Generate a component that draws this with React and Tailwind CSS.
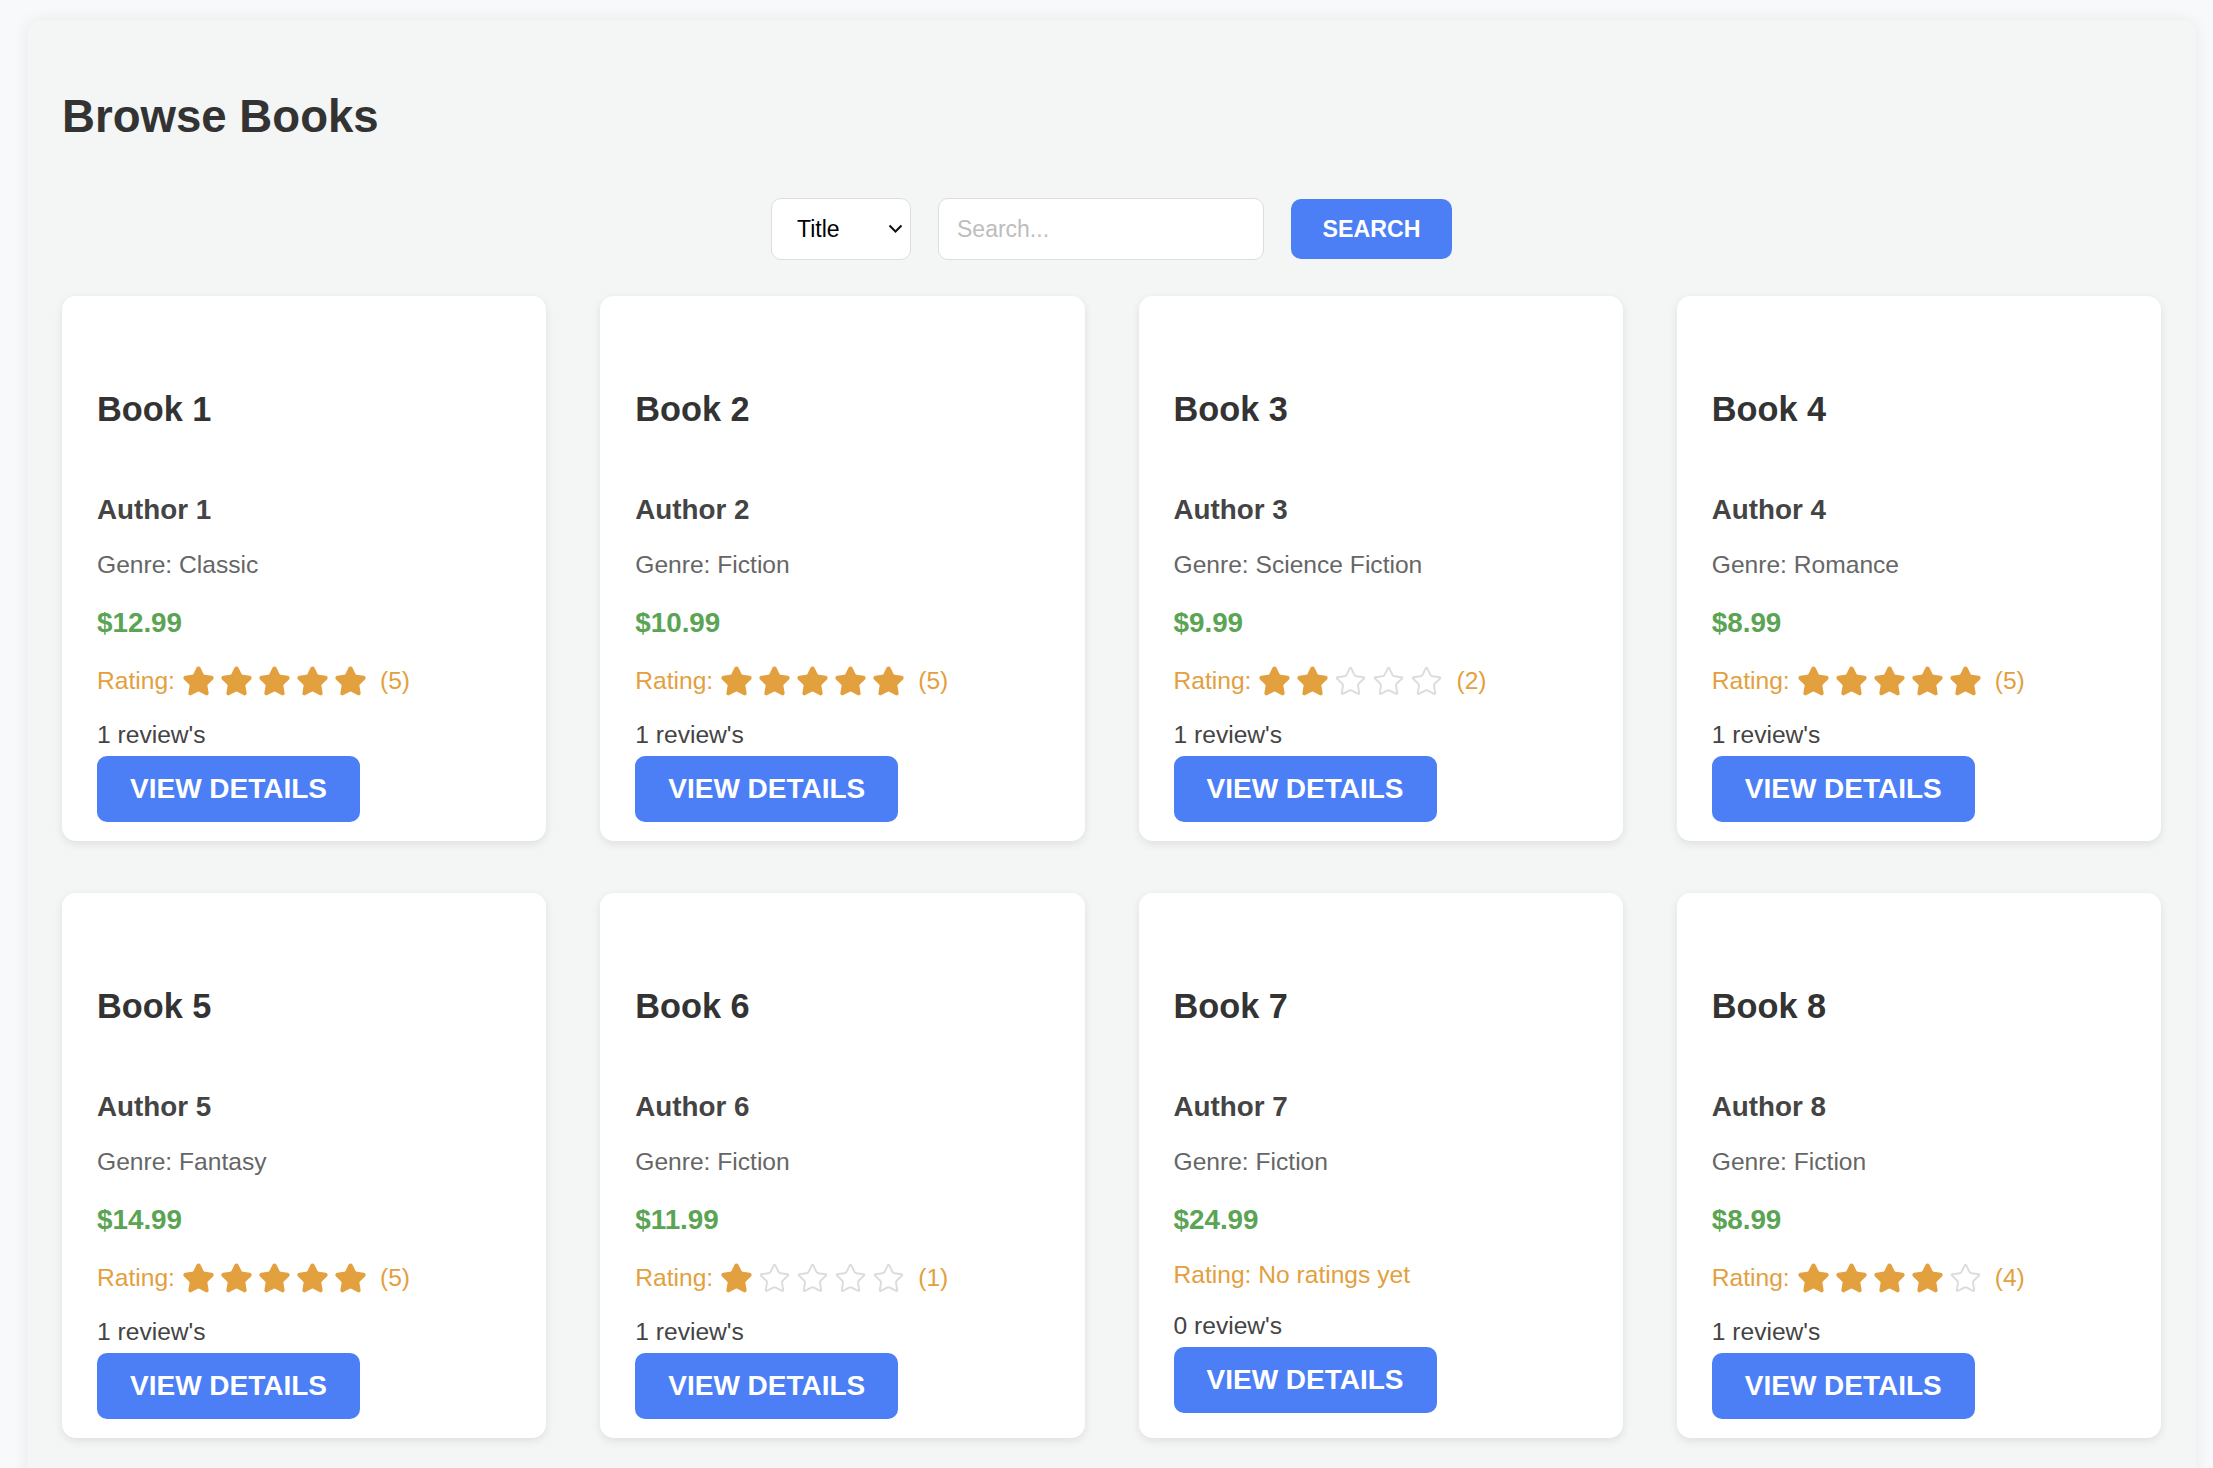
import React from "react";
import { Star } from "lucide-react";

const books = [
  { title: "Book 1", author: "Author 1", genre: "Classic", price: "$12.99", rating: 5, reviews: 1 },
  { title: "Book 2", author: "Author 2", genre: "Fiction", price: "$10.99", rating: 5, reviews: 1 },
  { title: "Book 3", author: "Author 3", genre: "Science Fiction", price: "$9.99", rating: 2, reviews: 1 },
  { title: "Book 4", author: "Author 4", genre: "Romance", price: "$8.99", rating: 5, reviews: 1 },
  { title: "Book 5", author: "Author 5", genre: "Fantasy", price: "$14.99", rating: 5, reviews: 1 },
  { title: "Book 6", author: "Author 6", genre: "Fiction", price: "$11.99", rating: 1, reviews: 1 },
  { title: "Book 7", author: "Author 7", genre: "Fiction", price: "$24.99", rating: 0, reviews: 0 },
  { title: "Book 8", author: "Author 8", genre: "Fiction", price: "$8.99", rating: 4, reviews: 1 },
];

function Rating({ value }) {
  if (!value) {
    return (
      <div className="mt-[25px] text-[24.6px] leading-[28px] text-[#e2a03e]">Rating: No ratings yet</div>
    );
  }
  return (
    <div className="mt-[25px] flex h-[34px] items-center text-[24.6px] leading-[28px] text-[#e2a03e]">
      <span>Rating:</span>
      <span className="ml-[7px] flex items-center gap-[5px]">
        {[1, 2, 3, 4, 5].map((i) =>
          i <= value ? (
            <Star key={i} size={33} strokeWidth={2} className="fill-[#e2a03e] text-[#e2a03e]" />
          ) : (
            <Star key={i} size={33} strokeWidth={1.4} className="text-[#dcdcdc]" />
          )
        )}
      </span>
      <span className="ml-[13px]">({value})</span>
    </div>
  );
}

function BookCard({ b }) {
  return (
    <div className="flex flex-col items-start rounded-[14px] bg-white px-[35px] pt-[94px] pb-[19px] shadow-[0_3px_10px_rgba(0,0,0,0.09)]">
      <h2 className="text-[34.3px] font-bold leading-[39px] text-[#333]">{b.title}</h2>
      <h3 className="mt-[65px] text-[27.8px] font-bold leading-[32px] text-[#444]">{b.author}</h3>
      <p className="mt-[25px] text-[24.6px] leading-[28px] text-[#666]">Genre: {b.genre}</p>
      <p className="mt-[28px] text-[27.8px] font-bold leading-[32px] text-[#5aa454]">{b.price}</p>
      <Rating value={b.rating} />
      <p className="mt-[23px] text-[24.6px] leading-[28px] text-[#444]">{b.reviews} review's</p>
      <button className="mt-[7px] h-[66px] rounded-[10px] bg-[#4c7ef6] px-[33px] text-[28px] font-bold leading-[32px] text-white">
        VIEW DETAILS
      </button>
    </div>
  );
}

export default function App() {
  return (
    <div className="min-h-screen bg-[#f8f9fb] pt-[20px] pl-[27px] font-['Liberation_Sans',Arial,sans-serif]">
      <div className="w-[2169px] rounded-[14px] bg-[#f4f6f5] px-[35px] pt-[71px] pb-[60px] shadow-[0_0_16px_rgba(0,0,0,0.07)]">
        <h1 className="text-[45.6px] font-bold leading-[52px] text-[#333]">Browse Books</h1>
        <div className="mt-[55px] flex items-center justify-center gap-[27px]">
          <div className="relative">
            <select className="h-[62px] w-[140px] appearance-none rounded-[10px] border border-[#dddddd] bg-white pl-[25px] text-[23px] text-black outline-none">
              <option>Title</option>
              <option>Author</option>
              <option>Genre</option>
            </select>
            <svg
              className="pointer-events-none absolute right-[8px] top-[26px]"
              width="15"
              height="9"
              viewBox="0 0 15 9"
              fill="none"
              stroke="#111"
              strokeWidth="2"
            >
              <path d="M1.5 1.5 L7.5 7.5 L13.5 1.5" />
            </svg>
          </div>
          <input
            className="h-[62px] w-[326px] rounded-[10px] border border-[#dddddd] bg-white pl-[18px] text-[23px] outline-none placeholder:text-[#bdbdbd]"
            placeholder="Search..."
          />
          <button className="h-[60px] w-[161px] rounded-[10px] bg-[#4c7ef6] text-[23.2px] font-bold text-white">
            SEARCH
          </button>
        </div>
        <div className="mt-[36px] grid grid-cols-4 gap-x-[54px] gap-y-[52px]">
          {books.map((b) => (
            <BookCard key={b.title} b={b} />
          ))}
        </div>
      </div>
    </div>
  );
}
